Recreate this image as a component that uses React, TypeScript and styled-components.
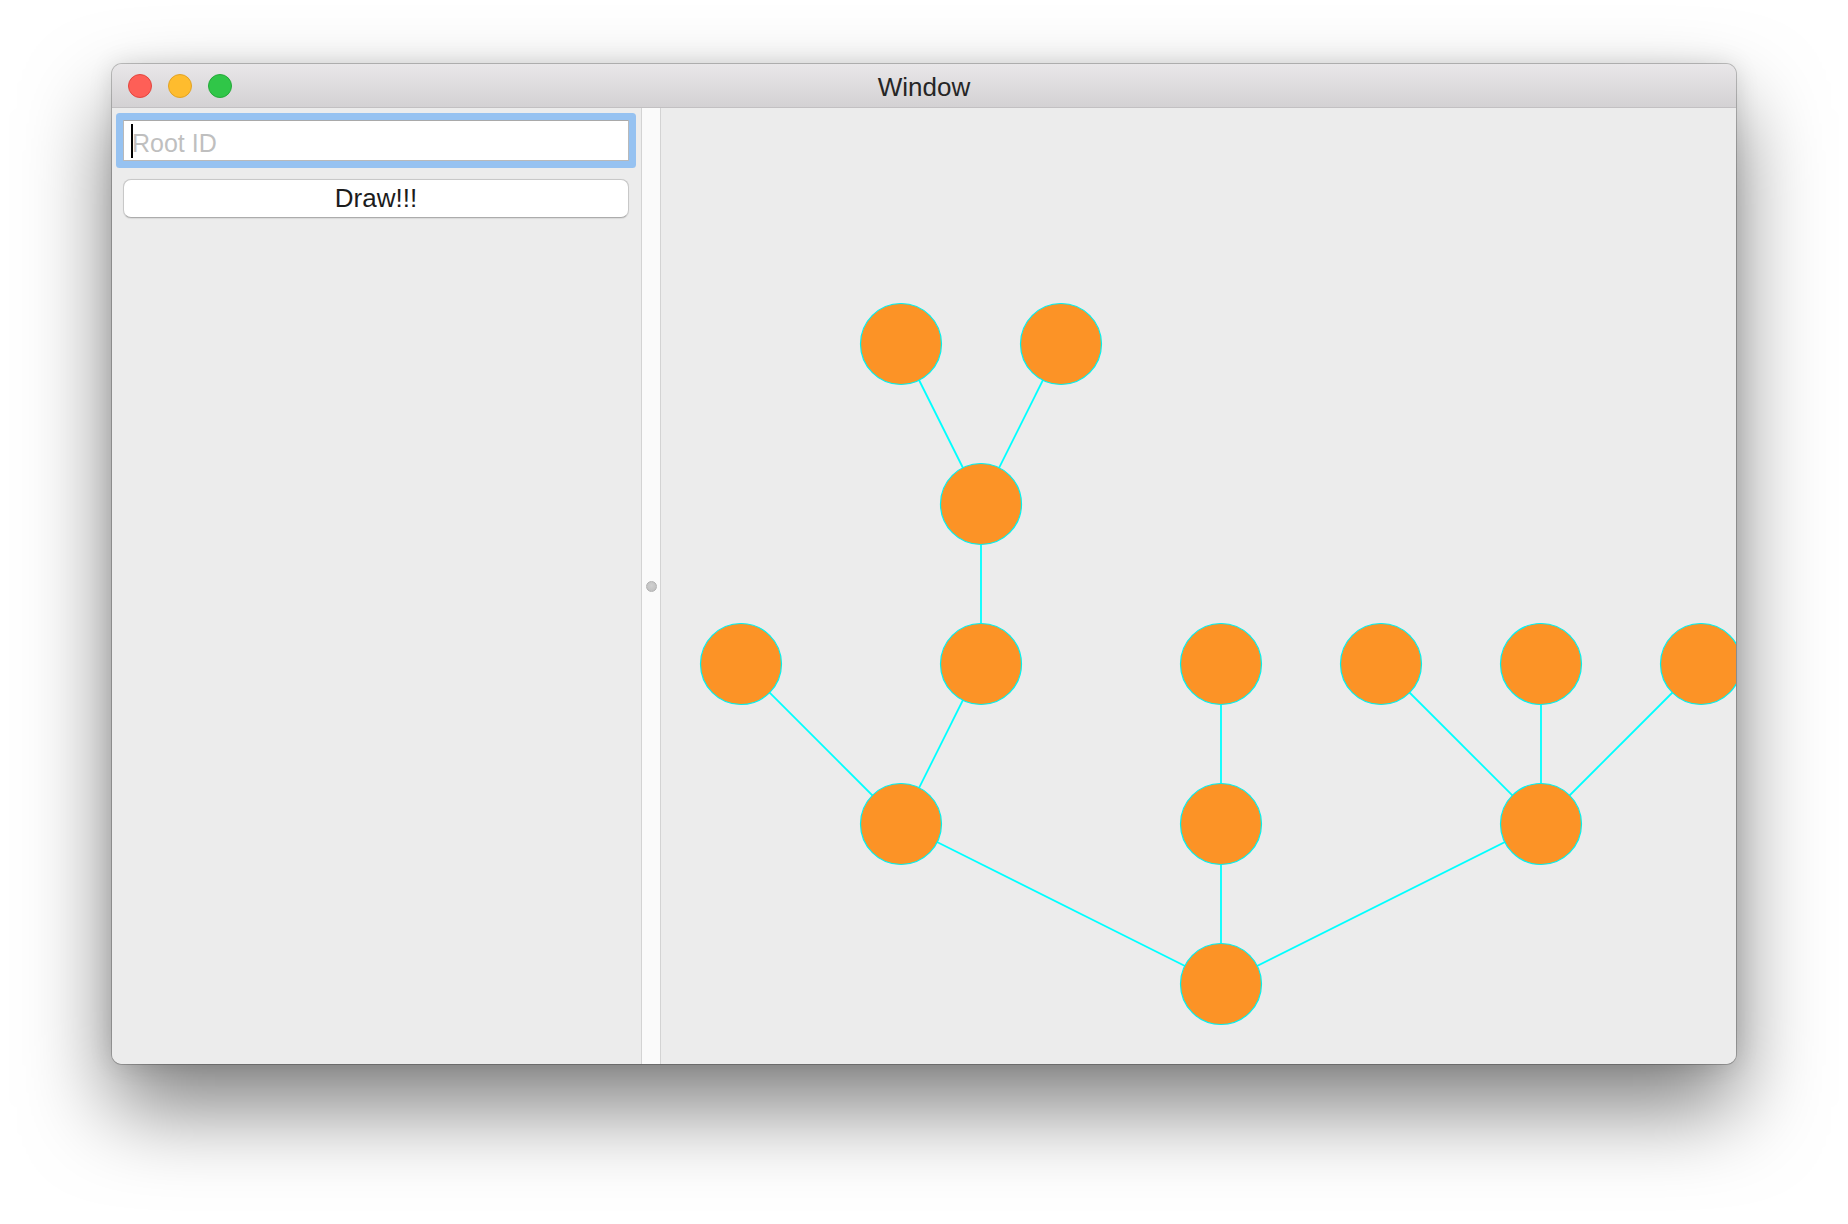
import React from "react";
import styled, { createGlobalStyle } from "styled-components";

const GlobalStyle = createGlobalStyle`
  html, body {
    margin: 0;
    padding: 0;
    background: #ffffff;
  }
  body {
    width: 1848px;
    height: 1224px;
    overflow: hidden;
    font-family: "Liberation Sans", Arial, sans-serif;
  }
`;

const Page = styled.div`
  width: 1848px;
  height: 1224px;
  box-sizing: border-box;
  padding: 64px 0 0 112px;
  background: #ffffff;
`;

const Window = styled.div`
  width: 1624px;
  height: 1000px;
  display: flex;
  flex-direction: column;
  border-radius: 10px;
  overflow: hidden;
  background: #ececec;
  box-shadow: 0 0 0 1px rgba(0, 0, 0, 0.22), 0 44px 86px rgba(0, 0, 0, 0.5),
    0 0 24px rgba(0, 0, 0, 0.12);
`;

const TitleBar = styled.div`
  height: 43px;
  flex: 0 0 auto;
  display: grid;
  grid-template-columns: 1fr auto 1fr;
  align-items: center;
  background: linear-gradient(#e9e7e9, #d3d1d3);
  border-bottom: 1px solid #c2c0c2;
`;

const TrafficLights = styled.div`
  display: flex;
  gap: 16px;
  padding-left: 16px;
`;

const Light = styled.span<{ $fill: string; $edge: string }>`
  width: 22px;
  height: 22px;
  border-radius: 50%;
  background: ${(p) => p.$fill};
  border: 1px solid ${(p) => p.$edge};
`;

const Title = styled.div`
  font-family: "Liberation Sans", Arial, sans-serif;
  font-size: 26px;
  color: #262626;
  padding-top: 3px;
`;

const Body = styled.div`
  flex: 1 1 auto;
  display: flex;
  min-height: 0;
`;

const Sidebar = styled.div`
  width: 529px;
  flex: 0 0 auto;
  box-sizing: border-box;
  padding: 12px 12px 0 11px;
  display: flex;
  flex-direction: column;
  gap: 18px;
  background: #ececec;
`;

const TextField = styled.div`
  position: relative;
  height: 41px;
  box-sizing: border-box;
  border: 1px solid #b9b9b9;
  border-top-color: #a9a9a9;
  border-radius: 1px;
  background: #ffffff;
  box-shadow: 0 0 0 7px #96c2f1;
  display: flex;
  align-items: center;
  padding: 5px 0 0 8px;
`;

const Caret = styled.span`
  position: absolute;
  left: 7px;
  top: 3px;
  width: 2px;
  height: 34px;
  background: #000000;
`;

const Placeholder = styled.span`
  font-family: "Liberation Sans", Arial, sans-serif;
  font-size: 25px;
  color: #bfbfbf;
`;

const DrawButton = styled.button`
  height: 39px;
  box-sizing: border-box;
  border: 1px solid #c8c8c8;
  border-bottom-color: #acacac;
  border-radius: 8px;
  background: #ffffff;
  font-family: "Liberation Sans", Arial, sans-serif;
  font-size: 26px;
  color: #1c1c1c;
  padding: 0;
  display: flex;
  align-items: center;
  justify-content: center;
  box-shadow: 0 0.5px 1px rgba(0, 0, 0, 0.08);
`;

const SplitDivider = styled.div`
  width: 20px;
  flex: 0 0 auto;
  box-sizing: border-box;
  border-left: 1px solid #d3d3d3;
  border-right: 1px solid #d3d3d3;
  background: #fafafa;
  display: flex;
  align-items: center;
  justify-content: center;
`;

const Knob = styled.span`
  width: 11px;
  height: 11px;
  box-sizing: border-box;
  border-radius: 50%;
  background: radial-gradient(circle at 50% 40%, #d0d0d0, #bdbdbd);
  border: 1px solid #b2b2b2;
`;

const Canvas = styled.div`
  flex: 1 1 auto;
  position: relative;
  overflow: hidden;
  background: #ececec;
`;

const GraphSvg = styled.svg`
  display: block;
  width: 100%;
  height: 100%;
`;

const Edge = styled.line`
  stroke: #00ffff;
  stroke-width: 1.8;
`;

const Node = styled.circle`
  fill: #fc9326;
  stroke: #00f2f2;
  stroke-width: 1.2;
`;

const CANVAS_H = 956;

type P = [number, number];

const nodes: P[] = [
  [560, 80],
  [240, 240],
  [560, 240],
  [880, 240],
  [80, 400],
  [320, 400],
  [560, 400],
  [720, 400],
  [880, 400],
  [1040, 400],
  [320, 560],
  [240, 720],
  [400, 720],
];

const edges: [P, P][] = [
  [[240, 720], [320, 560]],
  [[400, 720], [320, 560]],
  [[320, 560], [320, 400]],
  [[80, 400], [240, 240]],
  [[320, 400], [240, 240]],
  [[560, 400], [560, 240]],
  [[720, 400], [880, 240]],
  [[880, 400], [880, 240]],
  [[1040, 400], [880, 240]],
  [[240, 240], [560, 80]],
  [[560, 240], [560, 80]],
  [[880, 240], [560, 80]],
];

const fy = (y: number) => CANVAS_H - y;

export default function App() {
  return (
    <>
      <GlobalStyle />
      <Page>
        <Window>
          <TitleBar>
            <TrafficLights>
              <Light $fill="#fe5f57" $edge="#e2463f" />
              <Light $fill="#febc2e" $edge="#e1a325" />
              <Light $fill="#30c648" $edge="#25a93a" />
            </TrafficLights>
            <Title>Window</Title>
            <div />
          </TitleBar>
          <Body>
            <Sidebar>
              <TextField>
                <Placeholder>Root ID</Placeholder>
                <Caret />
              </TextField>
              <DrawButton>Draw!!!</DrawButton>
            </Sidebar>
            <SplitDivider>
              <Knob />
            </SplitDivider>
            <Canvas>
              <GraphSvg>
                {edges.map(([a, b], i) => (
                  <Edge key={i} x1={a[0]} y1={fy(a[1])} x2={b[0]} y2={fy(b[1])} />
                ))}
                {nodes.map(([x, y], i) => (
                  <Node key={i} cx={x} cy={fy(y)} r={40.5} />
                ))}
              </GraphSvg>
            </Canvas>
          </Body>
        </Window>
      </Page>
    </>
  );
}
